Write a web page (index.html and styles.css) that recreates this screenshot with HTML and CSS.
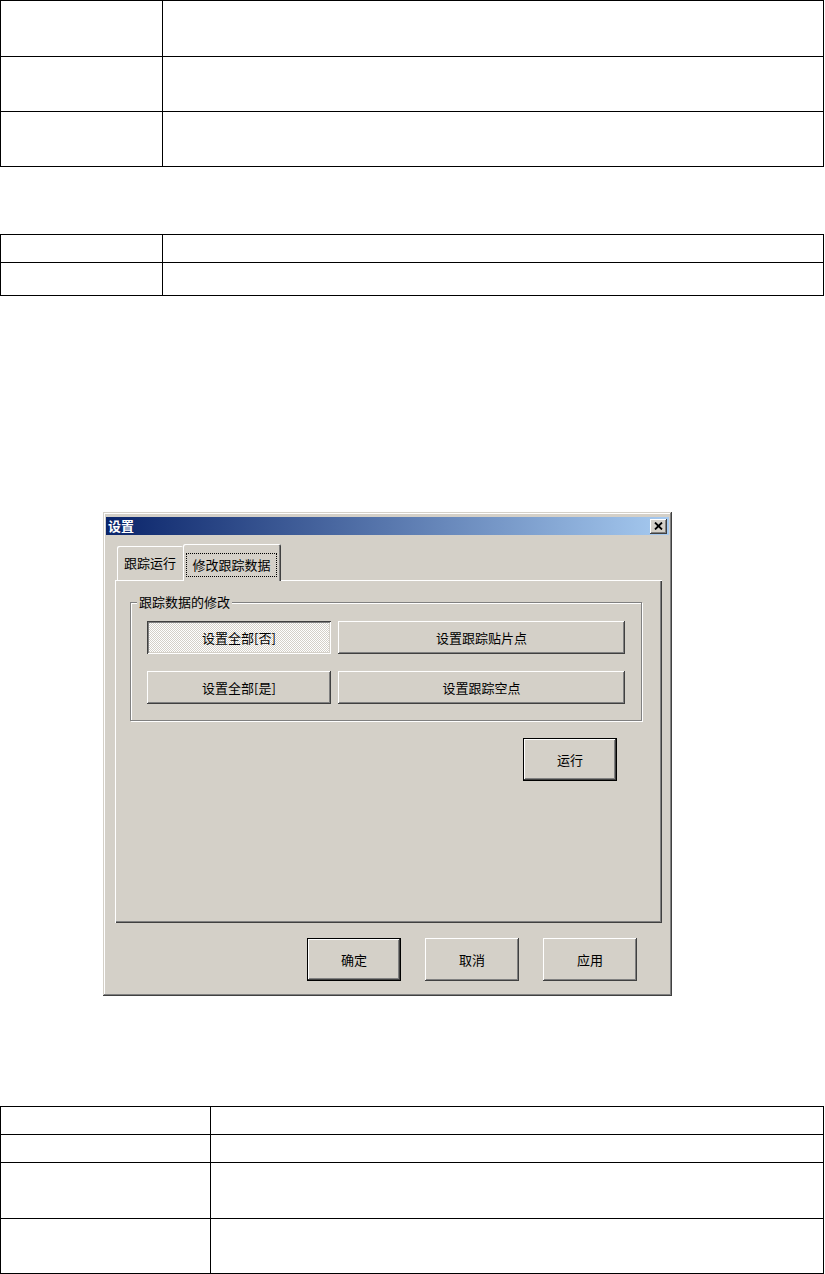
FILE: index.html
```html
<!DOCTYPE html>
<html>
	<head>
		<meta charset="UTF-8">
		<title>设置</title>
		<link rel="stylesheet" href="styles.css">
	</head>
	<body>
		<div class="sheet sheet-a rows-3">
			<div class="cell"></div><div class="cell"></div>
			<div class="cell"></div><div class="cell"></div>
			<div class="cell"></div><div class="cell"></div>
		</div>

		<div class="sheet sheet-a rows-2">
			<div class="cell"></div><div class="cell"></div>
			<div class="cell"></div><div class="cell"></div>
		</div>

		<div class="dialog">
			<div class="titlebar">
				<span class="title">设置</span>
				<span class="close">
					<svg width="9" height="8" viewBox="0 0 9 8">
						<path d="M1 0.5 L8 7.5 M8 0.5 L1 7.5" stroke="#000" stroke-width="1.8" fill="none"/>
					</svg>
				</span>
			</div>
			<div class="dlg-body">
				<div class="tabs">
					<div class="tab">跟踪运行</div>
					<div class="tab active"><span class="focus">修改跟踪数据</span></div>
				</div>
				<div class="panel">
					<div class="group">
						<span class="group-label">跟踪数据的修改</span>
						<div class="btn-grid">
							<div class="btn pressed">设置全部[否]</div>
							<div class="btn">设置跟踪贴片点</div>
							<div class="btn">设置全部[是]</div>
							<div class="btn">设置跟踪空点</div>
						</div>
					</div>
					<div class="run-row">
						<div class="btn default big">运行</div>
					</div>
				</div>
				<div class="footer">
					<div class="btn default big">确定</div>
					<div class="btn big">取消</div>
					<div class="btn big">应用</div>
				</div>
			</div>
		</div>

		<div class="sheet sheet-b rows-4">
			<div class="cell"></div><div class="cell"></div>
			<div class="cell"></div><div class="cell"></div>
			<div class="cell"></div><div class="cell"></div>
			<div class="cell"></div><div class="cell"></div>
		</div>
	</body>
</html>
```

FILE: styles.css
```css
*{
	padding: 0;
	margin: 0;
	box-sizing: border-box;
}
body{
	background-color: #fff;
	font-family: "Noto Sans CJK SC", "Liberation Sans", sans-serif;
	font-size: 13px;
	color: #000;
}

/* 表格 */
.sheet{
	display: grid;
	width: 824px;
	border-top: 1px solid #000;
	border-left: 1px solid #000;
}
.sheet-a{
	grid-template-columns: 162px 661px;
}
.sheet-b{
	grid-template-columns: 210px 613px;
	margin-top: 110px;
}
.rows-3{
	grid-template-rows: 56px 55px 55px;
}
.rows-2{
	grid-template-rows: 28px 33px;
	margin-top: 67px;
}
.rows-4{
	grid-template-rows: 28px 28px 56px 55px;
}
.cell{
	border-right: 1px solid #000;
	border-bottom: 1px solid #000;
}

/* 对话框 */
.dialog{
	width: 569px;
	height: 484px;
	margin: 216px 0 0 103px;
	padding: 5px 3px 3px;
	background-color: #d4d0c8;
	display: flex;
	flex-direction: column;
	box-shadow: inset -1px -1px #404040, inset 1px 1px #d4d0c8,
		inset -2px -2px #808080, inset 2px 2px #fff;
}
.titlebar{
	height: 18px;
	display: flex;
	align-items: center;
	justify-content: space-between;
	padding: 0 2px 0 2px;
	background: linear-gradient(to right, #0a246a, #a6caf0);
}
.title{
	color: #fff;
	font-weight: bold;
	line-height: 18px;
}
.close{
	width: 17px;
	height: 15px;
	background-color: #d4d0c8;
	display: flex;
	align-items: center;
	justify-content: center;
	box-shadow: inset -1px -1px #404040, inset 1px 1px #fff,
		inset -2px -2px #808080;
}
.dlg-body{
	flex: 1;
	display: flex;
	flex-direction: column;
	padding: 10px 7px 11px 9px;
}

/* 选项卡 */
.tabs{
	height: 36px;
	display: flex;
	align-items: flex-end;
	position: relative;
	z-index: 1;
	margin-bottom: -1px;
}
.tab{
	height: 34px;
	width: 66px;
	margin-left: 2px;
	margin-bottom: 1px;
	line-height: 33px;
	text-align: center;
	border-radius: 2px 2px 0 0;
	background-color: #d4d0c8;
	box-shadow: inset 1px 1px #fff;
}
.tab.active{
	height: 37px;
	width: 98px;
	margin-left: 0;
	margin-bottom: 0;
	padding: 9px 4px 0 3px;
	box-shadow: inset 1px 1px #fff, inset -1px 0 #404040, inset -2px 0 #808080;
}
.focus{
	display: block;
	height: 24px;
	line-height: 22px;
	border: 1px dotted #000;
}
.panel{
	height: 343px;
	padding: 22px 20px 0 15px;
	box-shadow: inset 1px 1px #fff, inset -1px -1px #404040,
		inset -2px -2px #808080;
}

/* 分组框 */
.group{
	position: relative;
	height: 119px;
	border: 1px solid #808080;
	box-shadow: inset 1px 1px #fff, 1px 1px #fff;
	padding: 18px 15px 16px 16px;
}
.group-label{
	position: absolute;
	top: -10px;
	left: 6px;
	padding: 0 2px;
	line-height: 18px;
	background-color: #d4d0c8;
}
.btn-grid{
	display: grid;
	grid-template-columns: 184px 287px;
	grid-template-rows: 33px 33px;
	column-gap: 7px;
	row-gap: 17px;
}

/* 按钮 */
.btn{
	display: flex;
	align-items: center;
	justify-content: center;
	background-color: #d4d0c8;
	box-shadow: inset -1px -1px #404040, inset 1px 1px #fff,
		inset -2px -2px #808080, inset 2px 2px #d4d0c8;
}
.btn.pressed{
	background: repeating-conic-gradient(#fff 0 25%, #d4d0c8 0 50%) 0 0 / 2px 2px;
	box-shadow: inset 1px 1px #404040, inset -1px -1px #fff,
		inset 2px 2px #808080, inset -2px -2px #d4d0c8;
}
.btn.big{
	width: 94px;
	height: 43px;
}
.btn.default{
	border: 1px solid #000;
}
.run-row{
	display: flex;
	justify-content: flex-end;
	margin: 17px 25px 0 0;
}
.footer{
	display: flex;
	justify-content: flex-end;
	gap: 24px;
	margin: 15px 25px 0 0;
}
```
